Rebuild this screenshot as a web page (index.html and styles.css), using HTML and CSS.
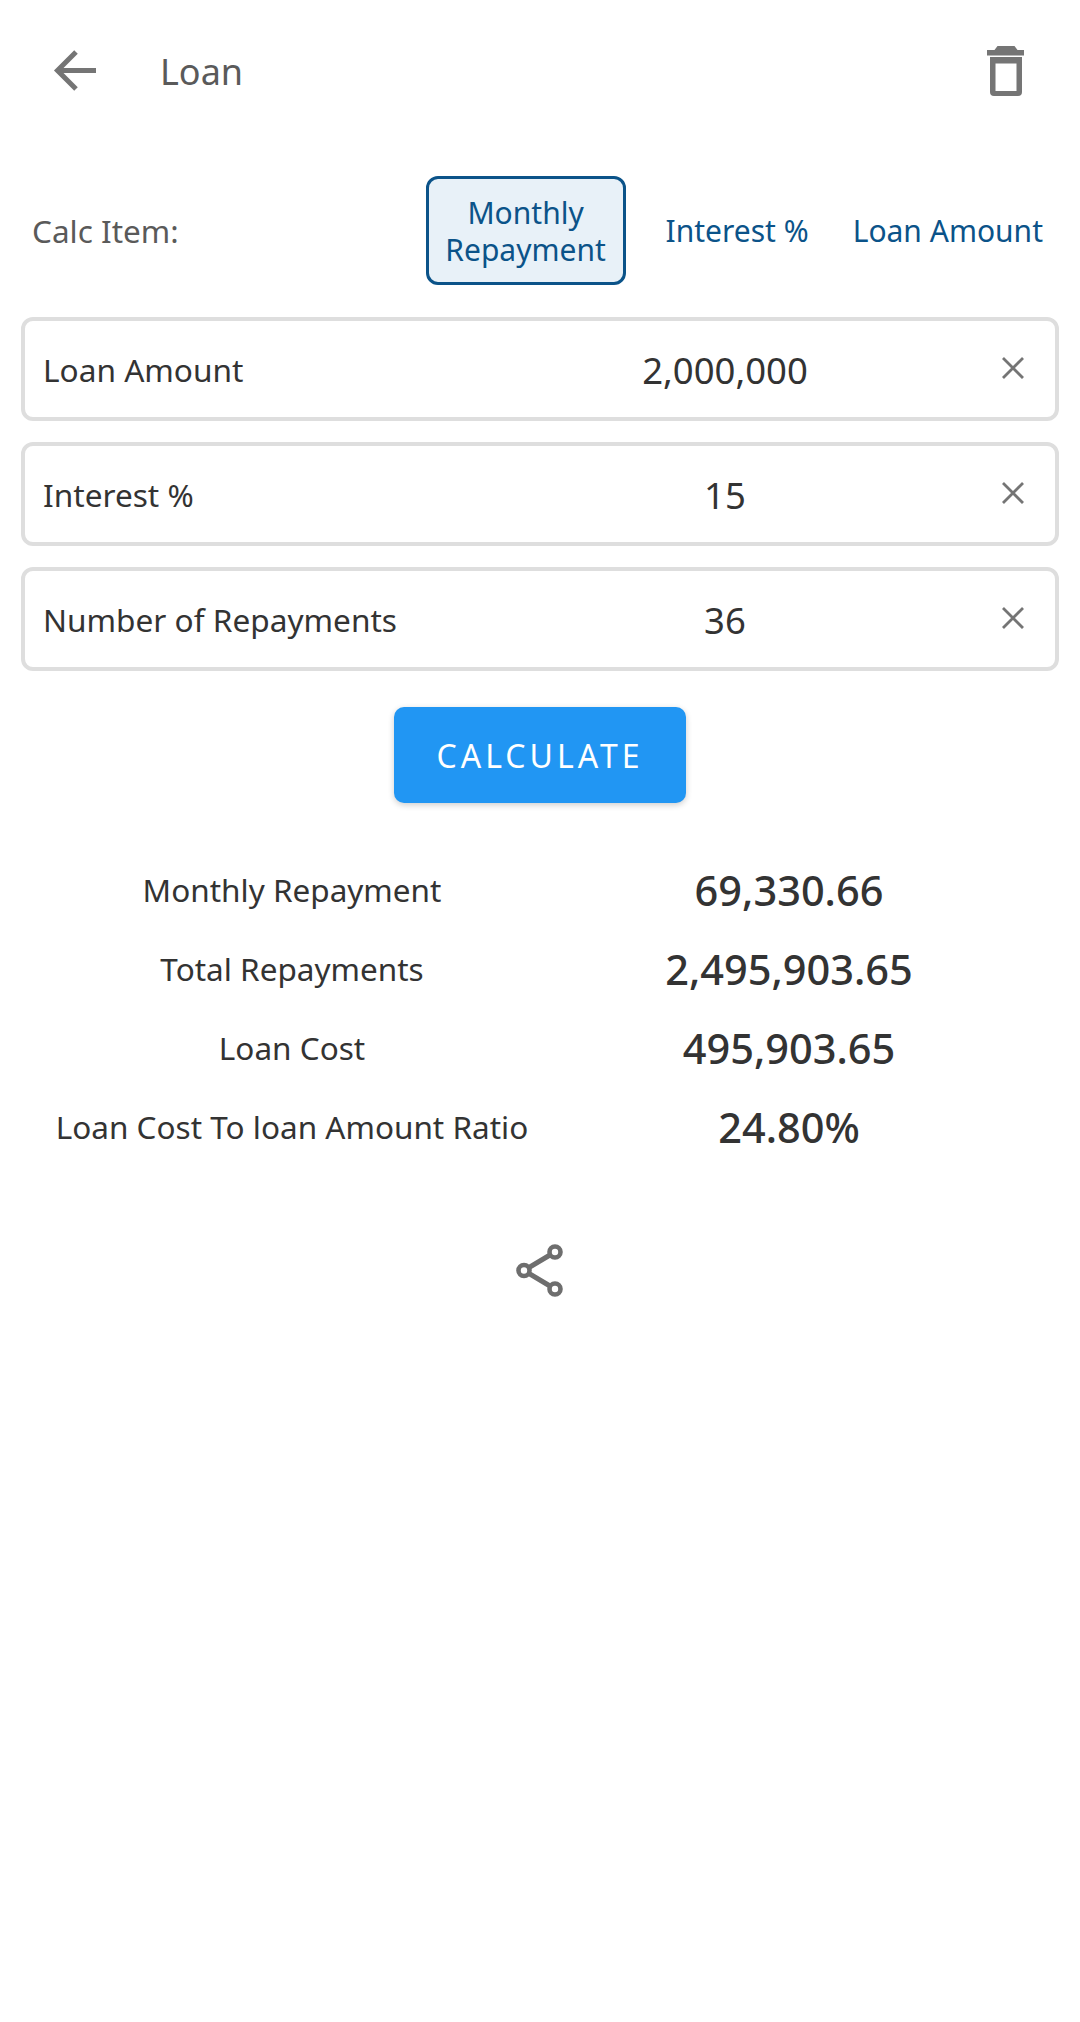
FILE: index.html
```html
<!DOCTYPE html>
<html lang="en">
<head>
<meta charset="utf-8">
<title>Loan</title>
<link rel="stylesheet" href="styles.css">
</head>
<body>
<header class="appbar">
  <svg class="icon-back" width="48" height="48" viewBox="0 0 48 48"><path d="M46 24.500H9M26 6 7.500 24.500 26 43" fill="none" stroke="#757575" stroke-width="5"/></svg>
  <h1 class="title">Loan</h1>
  <svg class="icon-trash" width="48" height="56" viewBox="0 0 48 56"><path d="M5 9h7.500l3-4h17l3 4H42v5.500H5z" fill="#757575"/><path d="M8 16h32v35a4 4 0 0 1-4 4H12a4 4 0 0 1-4-4zM13.500 22.500V50h21V22.500z" fill="#757575" fill-rule="evenodd"/></svg>
</header>
<section class="calc-row">
  <span class="calc-label">Calc Item:</span>
  <div class="tabs">
    <span class="tab tab-active">Monthly<br>Repayment</span>
    <span class="tab tab-interest">Interest %</span>
    <span class="tab tab-amount">Loan Amount</span>
  </div>
</section>
<section class="fields">
  <div class="field"><span class="field-label">Loan Amount</span><span class="field-value">2,000,000</span><svg class="clear" width="24" height="24" viewBox="0 0 24 24"><path d="M2 2l20 20M22 2 2 22" stroke="#757575" stroke-width="2.800" fill="none"/></svg></div>
  <div class="field"><span class="field-label">Interest %</span><span class="field-value">15</span><svg class="clear" width="24" height="24" viewBox="0 0 24 24"><path d="M2 2l20 20M22 2 2 22" stroke="#757575" stroke-width="2.800" fill="none"/></svg></div>
  <div class="field"><span class="field-label">Number of Repayments</span><span class="field-value">36</span><svg class="clear" width="24" height="24" viewBox="0 0 24 24"><path d="M2 2l20 20M22 2 2 22" stroke="#757575" stroke-width="2.800" fill="none"/></svg></div>
</section>
<div class="action"><button class="calc-btn">CALCULATE</button></div>
<section class="results">
  <div class="result"><span class="result-label">Monthly Repayment</span><span class="result-value">69,330.66</span></div>
  <div class="result"><span class="result-label">Total Repayments</span><span class="result-value">2,495,903.65</span></div>
  <div class="result"><span class="result-label">Loan Cost</span><span class="result-value">495,903.65</span></div>
  <div class="result"><span class="result-label">Loan Cost To loan Amount Ratio</span><span class="result-value">24.80%</span></div>
</section>
<div class="share">
  <svg width="48" height="54" viewBox="0 0 48 54"><path d="M39 8 8 26.500 39 45" fill="none" stroke="#6e6e6e" stroke-width="5"/><circle cx="39" cy="8" r="5.500" fill="#fff" stroke="#6e6e6e" stroke-width="4.600"/><circle cx="8" cy="26.500" r="5.500" fill="#fff" stroke="#6e6e6e" stroke-width="4.600"/><circle cx="39" cy="45" r="5.500" fill="#fff" stroke="#6e6e6e" stroke-width="4.600"/></svg>
</div>
</body>
</html>
```
FILE: styles.css
```css
* { box-sizing: border-box; }
html, body { margin: 0; padding: 0; background: #fff; }
body {
  width: 1080px;
  height: 2022px;
  overflow: hidden;
  font-family: "Noto Sans", sans-serif;
  color: #333;
}
.appbar {
  height: 142px;
  display: flex;
  align-items: center;
  padding: 0 50px 0 50px;
}
.icon-back { flex: none; margin-bottom: 2px; }
.title {
  margin: 0 0 0 62px;
  font-size: 36px;
  font-weight: 400;
  color: #5a5a5a;
  flex: 1;
}
.icon-trash { flex: none; margin-bottom: 4px; }
.calc-row {
  height: 118px;
  margin-top: 29px;
  display: flex;
  align-items: center;
  justify-content: space-between;
  padding: 0 35px 0 32px;
}
.calc-label { font-size: 31.500px; color: #5a5a5a; }
.tabs { display: flex; align-items: center; }
.tab {
  font-size: 30px;
  line-height: 37px;
  color: #0b5389;
  text-align: center;
}
.tab-active {
  width: 200px;
  height: 109px;
  border: 3px solid #0b5389;
  border-radius: 12px;
  background: #e8f1f8;
  padding-top: 15px;
}
.tab-interest { margin-left: 40px; }
.tab-amount { margin-left: 44px; margin-right: 2px; }
.fields {
  margin-top: 28px;
  padding: 0 21px;
  display: flex;
  flex-direction: column;
  gap: 21px;
}
.field {
  height: 104px;
  border: 4px solid #dedede;
  border-radius: 12px;
  display: grid;
  grid-template-columns: 500px 364px 1fr;
  align-items: center;
  padding: 1px 18px 0;
}
.field-label { font-size: 31.600px; color: #333; }
.field-value { font-size: 36.500px; text-align: center; color: #333; }
.clear { justify-self: end; margin-right: 12px; margin-bottom: 3px; }
.action { display: flex; justify-content: center; margin-top: 36px; }
.calc-btn {
  width: 292px;
  height: 96px;
  border: 0;
  border-radius: 10px;
  background: #2196f3;
  color: #fff;
  font-family: "Noto Sans", sans-serif;
  font-size: 32px;
  letter-spacing: 4px;
  box-shadow: 0 2px 6px rgba(0, 0, 0, .2);
}
.results { margin-top: 47px; display: flex; flex-direction: column; }
.result {
  height: 79px;
  display: grid;
  grid-template-columns: 584px 410px;
  align-items: center;
}
.result-label { font-size: 31.500px; text-align: center; color: #333; }
.result-value { font-size: 41.500px; font-weight: 500; text-align: center; color: #333; }
.share { display: flex; justify-content: center; margin-top: 78px; }
```
